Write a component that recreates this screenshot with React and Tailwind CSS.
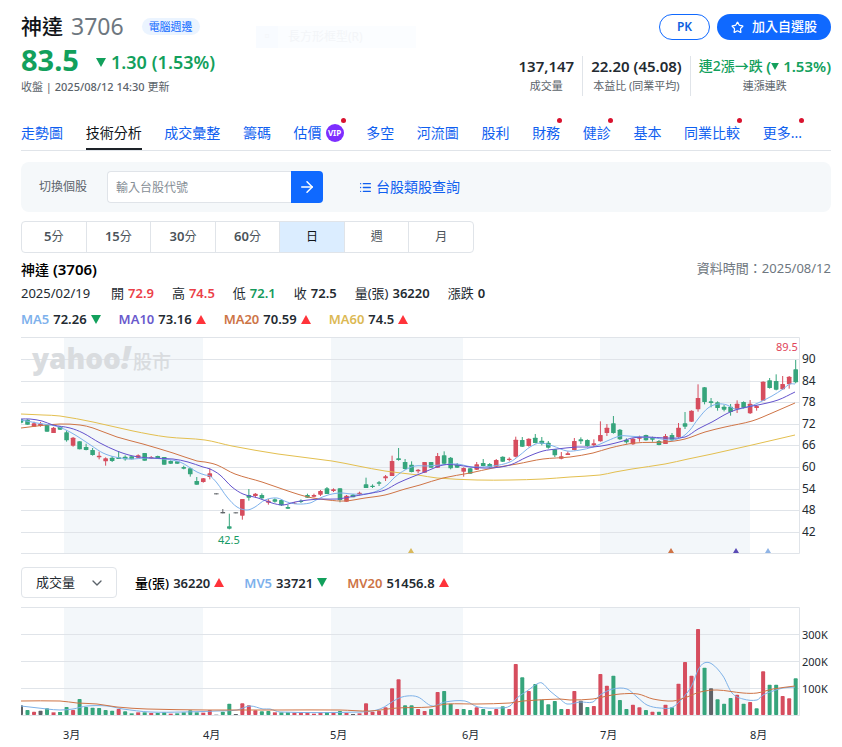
import React from "react";
import { ArrowRight, ChevronDown, List, Star } from "lucide-react";

const RED = "#d64d5e";
const GREEN = "#36a57c";
const DARK = "#5f6368";
const FILL = { R: RED, G: GREEN, K: DARK };

const STEP = 6.51;

/* color, high, body top, body bottom, low (in thirds of a pixel from the plot origin) */
const CANDLES = `
G 268 268 278 280|G 268 269 284 284|R 275 280 290 290|R 276 281 288 290|G 285 285 305 305|R 291 293 309 309
G 288 290 299 300|G 301 307 331 335|R 321 323 347 350|G 334 334 358 358|G 341 351 360 361|G 354 360 375 377
R 365 377 382 388|R 382 385 394 407|G 378 383 393 396|G 363 382 387 387|G 376 380 388 392|G 379 379 388 388
R 373 376 383 385|G 369 369 392 392|R 378 381 385 387|G 377 378 385 385|G 381 381 404 404|G 391 393 401 402
G 393 394 401 402|G 407 411 416 418|G 413 415 433 440|G 441 453 464 464|R 444 445 456 458|R 415 430 441 448
K 490 490 493 493|K 537 546 550 550|G 551 589 596 598|K 547 547 550 550|R 507 507 557 569|G 477 495 503 512
R 489 491 498 503|G 490 495 505 508|R 507 512 518 524|G 505 508 515 518|G 509 510 526 528|G 524 531 536 537
R 516 518 521 522|G 508 512 516 519|G 491 495 503 504|R 491 495 500 502|R 480 483 494 498|G 471 475 492 492
R 475 478 483 486|G 475 475 510 517|R 495 497 515 515|G 492 494 502 502|R 485 488 493 496|G 443 463 474 474
G 463 467 471 474|G 453 457 461 468|R 435 439 445 453|R 377 393 438 438|G 354 385 390 392|G 387 396 417 419
G 394 404 426 427|R 417 419 424 430|R 396 396 428 428|G 396 396 413 413|R 369 378 413 413|G 364 376 401 404
G 381 383 415 418|G 399 404 413 414|R 412 414 425 440|G 414 415 431 431|R 396 403 419 420|G 387 399 408 409
G 399 402 412 413|R 387 390 410 411|G 379 380 395 396|R 382 386 390 394|R 320 329 380 382|G 321 330 350 351
R 325 326 348 350|G 312 323 339 340|G 321 332 341 346|G 333 338 353 356|G 357 358 376 381|R 366 379 386 388
R 364 370 375 375|R 324 333 360 361|G 322 328 334 342|G 328 330 348 350|R 328 340 346 350|R 274 315 334 335
R 282 293 309 318|G 258 280 309 311|G 297 299 328 330|G 325 329 337 341|R 324 326 343 345|R 317 320 326 335
G 314 315 331 332|G 320 323 329 335|G 330 333 345 346|R 312 318 342 342|G 309 315 331 333|R 279 293 321 323
G 246 280 290 297|R 241 242 275 276|R 163 204 238 245|G 171 172 216 223|G 204 214 219 232|G 214 217 234 242
G 225 230 239 244|G 222 230 246 257|R 211 221 238 249|G 214 216 233 236|R 210 221 250 252|R 225 228 234 242
R 154 155 212 213|G 144 151 174 176|G 133 153 179 181|R 138 162 178 180|R 138 140 163 176|G 90 118 157 160`
  .trim()
  .split(/[|\n]/)
  .map((row) => {
    const [kind, ...v] = row.split(" ");
    const [high, top, bottom, low] = v.map((n) => (Number(n) - 21) / 3);
    return { kind, high, top, bottom, low };
  });

/* color and bar height (in thirds of a pixel) */
const VOLUMES = `K29 G15 R10 K13 G20 R8 G9 G24 R15 G48 G24 G22 G21 G15 G13 R18 G11 G5 R8 G8
R6 G6 G8 R4 G5 G8 G14 G8 R7 R15 K1 G10 G34 K3 R35 R29 R14 G11 G12 R8
G8 G8 R7 R7 R7 R4 R7 G9 R8 G12 R6 K3 R5 R35 R10 R13 R23 R80 R107 G29
G29 R18 R12 G18 R69 G72 G34 R18 G18 G15 R23 G18 G12 R18 G26 R18 R153 G113 R72 G93
G46 G32 G42 G18 R18 R72 K43 G24 R27 R123 R88 G118 G45 G18 R31 R23 G15 R10 G10 R31
G23 R94 R159 R118 R258 G142 K80 G47 G34 G51 R61 G34 R39 G20 R131 G91 G91 R57 R50 G110`
  .split(/\s+/)
  .map((s) => ({ kind: s[0], height: Number(s.slice(1)) / 3 }));

const MA5 =
  "0,83 16,86 29,88 38,90 49,95 59,101 71,109 82,116 94,120 109,122 126,121 142,122 159,125 176,135 184,138 189,139 196,146 206,160 216,170 226,173 234,170 244,163 256,161 266,165 276,167 289,166 297,162 307,158 319,156 331,157 344,157 356,154 366,148 374,140 384,133 394,129 406,129 419,128 436,127 452,130 472,129 489,125 499,118 509,110 519,106 532,109 546,114 559,113 572,110 586,104 599,99 607,99 621,100 634,101 651,103 661,100 669,93 677,82 687,71 697,67 706,68 714,72 727,70 737,66 751,59 762,52 769,47 774,47";
const MA10 =
  "0,82 9,82 21,84 32,88 49,91 62,96 79,106 96,114 112,119 129,121 152,122 167,125 182,130 189,132 199,138 211,150 222,157 237,161 251,166 262,168 274,165 287,163 301,162 317,162 334,159 351,156 364,153 377,146 391,140 406,134 422,128 436,128 449,130 469,131 489,128 506,120 522,114 536,112 556,110 572,110 586,108 602,104 611,101 627,100 644,101 664,100 677,92 691,85 707,76 721,71 737,68 757,63 774,55";
const MA20 =
  "0,91 16,89 39,87 59,88 72,91 96,100 122,107 152,116 176,124 184,125 196,128 214,137 241,145 267,154 287,160 307,163 324,164 344,161 364,158 384,152 399,148 422,141 449,136 472,131 496,127 522,122 549,120 572,116 589,111 614,106 644,105 664,102 684,95 704,90 731,84 751,76 774,66";
const MA60 =
  "0,77 22,78 39,79 72,85 112,94 146,100 184,103 211,109 257,117 311,124 337,129 364,134 397,138 416,141 456,143 489,143 522,142 549,140 579,138 594,135 611,132 644,127 667,122 691,117 731,108 774,98";
const MV5 =
  "0,99 26,102 39,103 52,102 66,99 86,99 102,102 129,105 162,105 196,104 216,103 229,99 242,102 249,102 259,105 339,105 359,102 376,92 386,89 397,90 411,99 424,95 444,94 457,100 479,101 489,99 496,91 506,84 516,77 521,76 529,84 539,92 546,97 559,95 572,95 579,88 592,82 606,82 616,90 626,98 639,101 652,100 666,86 672,76 677,63 683,56 691,57 702,69 711,86 722,92 736,93 742,88 752,84 762,81 774,80";
const MV20 =
  "0,94 39,94 56,96 76,97 96,100 126,102 186,103 212,103 259,103 319,103 349,104 376,101 409,100 426,97 456,97 489,96 502,94 539,92 549,93 572,92 586,89 599,87 617,87 632,92 652,94 666,90 679,85 696,83 722,86 736,86 752,82 774,79";

/* Turns a list of points into a smooth curve. */
function curve(text) {
  const p = text.split(" ").map((s) => s.split(",").map(Number));
  let d = `M${p[0][0]} ${p[0][1]}`;
  for (let i = 0; i < p.length - 1; i++) {
    const a = p[i - 1] || p[i];
    const b = p[i];
    const c = p[i + 1];
    const e = p[i + 2] || c;
    const dx = (c[0] - b[0]) / 3;
    const s1 = (c[1] - a[1]) / (c[0] - a[0]);
    const s2 = (e[1] - b[1]) / (e[0] - b[0]);
    d += `C${b[0] + dx} ${b[1] + s1 * dx} ${c[0] - dx} ${c[1] - s2 * dx} ${c[0]} ${c[1]}`;
  }
  return d;
}

function Line({ points, color }) {
  return <path d={curve(points)} fill="none" stroke={color} strokeWidth="1" />;
}

function Bands({ height }) {
  return (
    <g fill="#f3f7fa">
      <rect x="43" y="0" width="139" height={height} />
      <rect x="310" y="0" width="132" height={height} />
      <rect x="579" y="0" width="150" height={height} />
    </g>
  );
}

function Triangle({ down, small }) {
  return (
    <svg
      viewBox="0 0 10 9"
      className={`inline-block shrink-0 ${small ? "h-[7px] w-2" : "h-[9px] w-[10px]"}`}
      fill={down ? "#12a05c" : "#ff333a"}
      aria-hidden="true"
    >
      <path d={down ? "M0 0h10L5 9z" : "M0 9h10L5 0z"} />
    </svg>
  );
}

function PriceChart() {
  const prices = [90, 84, 78, 72, 66, 60, 54, 48, 42];
  return (
    <svg viewBox="0 0 810 217" className="mt-2 block h-auto w-full" role="img" aria-label="K線圖">
      <defs>
        <clipPath id="plot">
          <rect x="0" y="0" width="778" height="217" />
        </clipPath>
      </defs>
      <Bands height={216} />
      <g stroke="#e0e4e9" strokeWidth="1">
        <path d="M0 .5H778.500V216.500H0" fill="none" />
        {prices.map((p, i) => (
          <line key={p} x1="0" x2="778" y1={Math.round(22 + i * 21.6) + 0.5} y2={Math.round(22 + i * 21.6) + 0.5} />
        ))}
      </g>
      <g fontFamily="'Open Sans','Noto Sans CJK TC',sans-serif" fill="#d9dcdf">
        <text x="11" y="32" fontSize="28" fontWeight="800">
          yahoo<tspan fontSize="31" fontStyle="italic">!</tspan>
        </text>
        <text x="112" y="32" fontSize="19" fontWeight="500">
          股市
        </text>
      </g>
      <g clipPath="url(#plot)">
        {CANDLES.map((c, i) => (
          <g key={i} fill={FILL[c.kind]}>
            <rect x={i * STEP - 0.5} y={c.high} width="1" height={c.low - c.high} />
            <rect x={i * STEP - 2.3} y={c.top} width="4.600" height={Math.max(1, c.bottom - c.top)} rx={c.kind === "K" ? 0 : 0.6} />
          </g>
        ))}
        <Line points={MA60} color="#e3bf4f" />
        <Line points={MA20} color="#cf7446" />
        <Line points={MA5} color="#7eb2ec" />
        <Line points={MA10} color="#6453cd" />
      </g>
      <path d="M387 216l3-5 3 5z" fill="#d9b95c" />
      <path d="M647 216l3-5 3 5z" fill="#cf7446" />
      <path d="M712 216l3-5 3 5z" fill="#5a4bb5" />
      <path d="M744 216l3-5 3 5z" fill="#8fb4e6" />
      <g fontFamily="'Noto Sans',sans-serif" fontSize="11">
        <text x="755" y="14" fill="#e0455a">89.5</text>
        <text x="197" y="207" fill="#159a64">42.5</text>
        <g fill="#232a31" fontSize="12">
          {prices.map((p, i) => (
            <text key={p} x="781" y={Math.round(26 + i * 21.6)}>
              {p}
            </text>
          ))}
        </g>
      </g>
    </svg>
  );
}

function VolumeChart() {
  const months = [
    ["3月", 42],
    ["4月", 182],
    ["5月", 309],
    ["6月", 441],
    ["7月", 579],
    ["8月", 729],
  ];
  return (
    <svg viewBox="0 0 810 136" className="mt-[9px] block h-auto w-full" role="img" aria-label="成交量圖">
      <Bands height={108} />
      <g stroke="#e0e4e9" strokeWidth="1">
        <path d="M0 .5H778.500V108.500H0" fill="none" />
        <path d="M0 27.500H778M0 54.500H778M0 81.500H778" />
      </g>
      <g clipPath="url(#plot)">
        {VOLUMES.map((v, i) => (
          <rect key={i} x={i * STEP - 2} y={108 - v.height} width="4" height={v.height} rx={v.height > 3 ? 0.8 : 0} fill={FILL[v.kind]} />
        ))}
        <Line points={MV5} color="#7eb2e8" />
        <Line points={MV20} color="#cf7446" />
      </g>
      <g fontFamily="'Noto Sans','Noto Sans CJK TC',sans-serif" fill="#232a31" fontSize="11">
        {["300K", "200K", "100K"].map((t, i) => (
          <text key={t} x="781" y={32 + i * 27}>
            {t}
          </text>
        ))}
        {months.map(([m, x]) => (
          <text key={m} x={x} y="132">
            {m}
          </text>
        ))}
      </g>
    </svg>
  );
}

const TABS = [
  { label: "走勢圖" },
  { label: "技術分析", active: true },
  { label: "成交彙整" },
  { label: "籌碼" },
  { label: "估價", vip: true, dot: true },
  { label: "多空" },
  { label: "河流圖" },
  { label: "股利" },
  { label: "財務", dot: true },
  { label: "健診", dot: true },
  { label: "基本" },
  { label: "同業比較", dot: true },
  { label: "更多...", dot: true },
];

const PERIODS = [["5", "分"], ["15", "分"], ["30", "分"], ["60", "分"], ["", "日"], ["", "週"], ["", "月"]];

const QUOTE = [
  ["開", "72.9", "text-[#eb3f48]"],
  ["高", "74.5", "text-[#eb3f48]"],
  ["低", "72.1", "text-[#159a5c]"],
  ["收", "72.5", "text-[#232a31]"],
  ["量(張)", "36220", "text-[#232a31]"],
  ["漲跌", "0", "text-[#232a31]"],
];

const AVERAGES = [
  ["MA5", "72.26", true, "text-[#7eb1ec]"],
  ["MA10", "73.16", false, "text-[#6a5acd]"],
  ["MA20", "70.59", false, "text-[#cd7446]"],
  ["MA60", "74.5", false, "text-[#dcb954]"],
];

const VOLUME_AVERAGES = [
  ["量(張)", "36220", false, "font-medium text-black"],
  ["MV5", "33721", true, "text-[#7eb1ec]"],
  ["MV20", "51456.8", false, "text-[#cd7446]"],
];

function Legend({ items }) {
  return items.map(([name, value, down, color]) => (
    <span key={name} className="flex items-center gap-1 font-semibold">
      <span className={color}>{name}</span>
      <span className="text-[#232a31]">{value}</span>
      <Triangle down={down} />
    </span>
  ));
}

export default function App() {
  return (
    <main className="relative overflow-hidden bg-white pb-1 pl-[21px] pr-[11px] font-['Noto_Sans','Noto_Sans_CJK_TC',sans-serif] text-[#232a31]">
      <div className="absolute left-[256px] top-[26px] flex h-[22px] w-40 items-center bg-[#fbfdff] text-xs text-[#f3f5f8]" aria-hidden="true">
        <span className="flex h-full w-[22px] items-center justify-center bg-[#f8fbff]">▫</span>
        <span className="pl-2.5">長方形框型(R)</span>
      </div>

      <header className="flex justify-between">
        <div className="pt-[11px]">
          <div className="flex h-[30px] items-center">
            <h1 className="text-[21px] font-medium leading-[30px] text-[#101418]">神達</h1>
            <span className="ml-2 text-[23px] leading-[30px] text-[#6e7780]">3706</span>
            <a href="#sector" className="ml-[18px] rounded-full bg-[#ebf4ff] px-[7px] text-[11px] leading-[17px] text-[#0f69ff]">
              電腦週邊
            </a>
          </div>
          <div className="flex h-[38px] items-center text-[#12a05c]">
            <span className="text-[29px] font-bold leading-[38px]">83.5</span>
            <span className="ml-[17px] flex items-center gap-[5px] pt-1 text-lg font-semibold">
              <Triangle down />
              <span>1.30</span>
              <span>(1.53%)</span>
            </span>
          </div>
          <p className="text-[11px] leading-[15px] text-[#5b636a]">
            收盤 | <span className="font-medium">2025/08/12 14:30</span> 更新
          </p>
        </div>

        <div className="flex flex-col items-end pt-3.5">
          <div className="flex gap-[7px]">
            <button type="button" className="h-[26px] w-[51px] rounded-full border border-[#0f69ff] text-xs font-semibold text-[#0f5fe0]">
              PK
            </button>
            <button type="button" className="flex h-[26px] w-[114px] items-center justify-center gap-2 rounded-full bg-[#0f69ff] text-[13px] font-medium text-white">
              <Star size={13} strokeWidth={2.2} />
              加入自選股
            </button>
          </div>
          <dl className="mt-4 flex text-center">
            <div className="flex flex-col-reverse border-r border-[#e0e4e9] pr-2">
              <dt className="text-[11px] leading-5 text-[#5b636a]">成交量</dt>
              <dd className="text-[15px] font-semibold leading-5">137,147</dd>
            </div>
            <div className="flex flex-col-reverse border-r border-[#e0e4e9] px-2">
              <dt className="text-[11px] leading-5 text-[#5b636a]">本益比 (同業平均)</dt>
              <dd className="text-[15px] font-semibold leading-5">22.20 (45.08)</dd>
            </div>
            <div className="flex flex-col-reverse pl-2">
              <dt className="text-[11px] leading-5 text-[#5b636a]">連漲連跌</dt>
              <dd className="flex items-center text-[15px] font-semibold leading-5 text-[#12a05c]">
                <span className="text-sm font-medium leading-5">連2漲→跌&nbsp;</span>(<Triangle down small />&nbsp;1.53%)
              </dd>
            </div>
          </dl>
        </div>
      </header>

      <nav className="mt-[21px] flex justify-between border-b border-[#e0e4e9] pr-[29px] text-sm leading-5" aria-label="個股">
        {TABS.map((t) => (
          <a
            key={t.label}
            href="#tab"
            className={
              t.active
                ? "relative flex h-[33px] items-center border-b-2 border-[#1d2228] text-[#101418]"
                : "relative flex h-[33px] items-center pb-0.5 text-[#0f5ff0]"
            }
          >
            {t.label}
            {t.vip && (
              <span className="ml-1 flex h-[18px] w-[18px] items-center justify-center rounded-full bg-[#7d2eff] text-[8px] font-bold leading-none text-white">
                VIP
              </span>
            )}
            {t.dot && <span className="absolute right-[-2px] top-px h-[5px] w-[5px] rounded-full bg-[#d9122e]" />}
          </a>
        ))}
      </nav>

      <form className="mt-[11px] flex h-[50px] items-center rounded-lg bg-[#f5f8fa] pl-[18px]" onSubmit={(e) => e.preventDefault()}>
        <label htmlFor="code" className="text-xs text-[#5b636a]">
          切換個股
        </label>
        <input
          id="code"
          type="text"
          placeholder="輸入台股代號"
          className="ml-5 h-8 w-[184px] rounded-l border border-r-0 border-[#e0e4e9] bg-white px-2 text-xs outline-none placeholder:text-[#868e96]"
        />
        <button type="submit" aria-label="查詢" className="flex h-8 w-8 items-center justify-center rounded-r bg-[#0f69ff] text-white">
          <ArrowRight size={18} strokeWidth={2} />
        </button>
        <a href="#sectors" className="ml-9 flex items-center gap-1 text-sm text-[#0f5ff0]">
          <List size={13} strokeWidth={2.4} />
          台股類股查詢
        </a>
      </form>

      <div className="mt-[9px] flex h-8 w-[453px] divide-x divide-[#e0e4e9] overflow-hidden rounded border border-[#e0e4e9] text-xs">
        {PERIODS.map(([n, unit]) => (
          <button
            key={n + unit}
            type="button"
            className={unit === "日" ? "flex-1 bg-[#dbedff] text-[#101418]" : "flex-1 text-[#4b535a]"}
          >
            <span className="text-[13px] font-semibold">{n}</span>
            {unit}
          </button>
        ))}
      </div>

      <div className="flex justify-between">
        <h2 className="mt-1.5 text-[15px] font-semibold leading-5 text-black">
          <span className="text-sm font-medium leading-5">神達</span> (3706)
        </h2>
        <p className="mt-[5px] text-[13px] leading-5 text-[#6e7780]">資料時間：2025/08/12</p>
      </div>
      <div className="mt-[3px] flex gap-[18px] text-[13px] leading-5">
        <span className="w-[72px]">2025/02/19</span>
        {QUOTE.map(([name, value, color]) => (
          <span key={name} className="flex gap-1">
            <span>{name}</span>
            <span className={`font-semibold ${color}`}>{value}</span>
          </span>
        ))}
      </div>
      <div className="mt-1.5 flex gap-[18px] text-[13px] leading-5">
        <Legend items={AVERAGES} />
      </div>

      <PriceChart />

      <div className="mt-[13px] flex items-center text-[13px]">
        <div className="relative">
          <select aria-label="指標" className="block h-[31px] w-24 appearance-none rounded border border-[#e0e4e9] bg-white pl-3.5 text-[13px] text-[#232a31]">
            <option>成交量</option>
          </select>
          <ChevronDown size={16} strokeWidth={2} className="pointer-events-none absolute right-3 top-2 text-[#5b636a]" />
        </div>
        <div className="ml-[18px] flex gap-5 leading-5">
          <Legend items={VOLUME_AVERAGES} />
        </div>
      </div>

      <VolumeChart />
    </main>
  );
}
